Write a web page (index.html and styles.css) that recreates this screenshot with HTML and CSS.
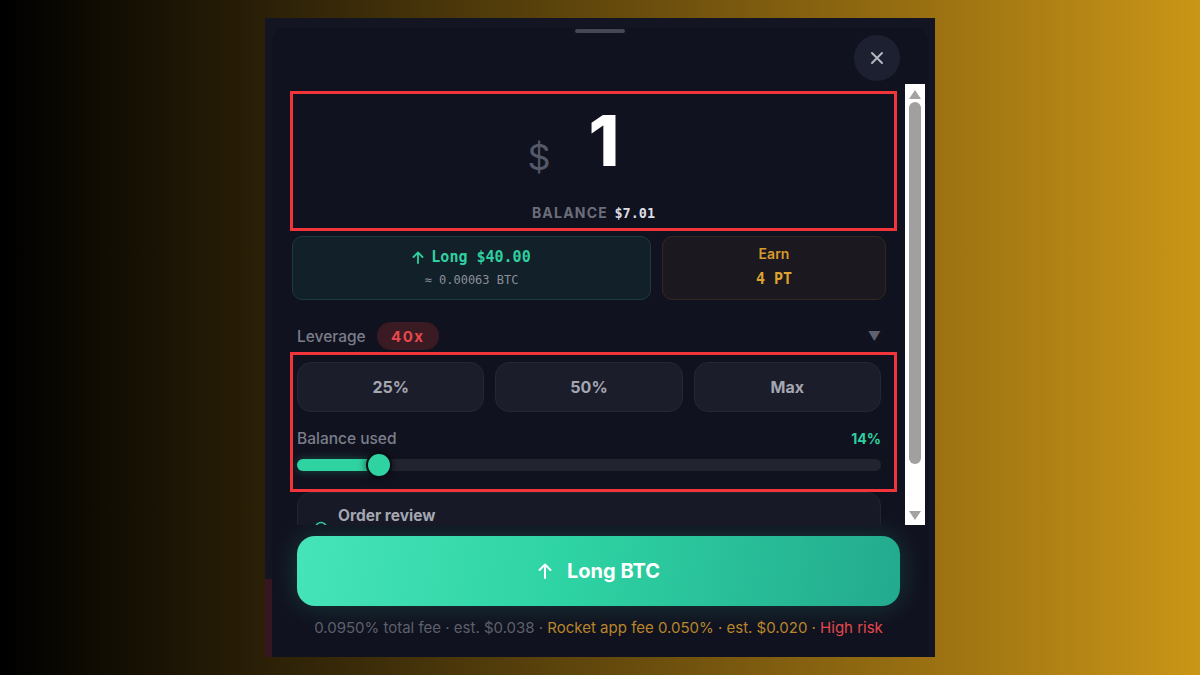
FILE: index.html
```html
<!DOCTYPE html>
<html>
<head>
  <title>Long BTC</title>
  <link rel="stylesheet" href="styles.css">
</head>
<body>
  <div class="sheet">
    <div class="panel">
      <div class="handle"></div>

      <div class="panel-head">
        <button class="close-btn" aria-label="Close">
          <svg width="16" height="16" viewBox="0 0 16 16">
            <path d="M3 3 L13 13 M13 3 L3 13" stroke="#b4b6be" stroke-width="2" stroke-linecap="round"/>
          </svg>
        </button>
      </div>

      <div class="scroll-area">
        <div class="scroll-content">
          <div class="amount-box marked">
            <div class="amount-row">
              <span class="currency">$</span>
              <span class="amount">1</span>
            </div>
            <div class="balance">BALANCE <span class="mono">$7.01</span></div>
          </div>

          <div class="cards">
            <div class="card card-long">
              <div class="card-title">
                <svg width="12" height="13" viewBox="0 0 12 13">
                  <path d="M6 12 V2 M1.5 6 L6 1.5 L10.5 6" stroke="#30cf9f" stroke-width="1.8" fill="none" stroke-linecap="round" stroke-linejoin="round"/>
                </svg>
                Long $40.00
              </div>
              <div class="card-sub">≈ 0.00063 BTC</div>
            </div>
            <div class="card card-earn">
              <div class="earn-label">Earn</div>
              <div class="earn-value">4 PT</div>
            </div>
          </div>

          <div class="leverage-row">
            <span class="muted-label">Leverage</span>
            <span class="lev-badge">40x</span>
            <span class="caret">▼</span>
          </div>

          <div class="size-box marked">
            <div class="quick-btns">
              <button class="quick">25%</button>
              <button class="quick">50%</button>
              <button class="quick">Max</button>
            </div>
            <div class="used-row">
              <span class="muted-label">Balance used</span>
              <span class="used-pct">14%</span>
            </div>
            <div class="track">
              <div class="fill" style="width: 14%"></div>
              <div class="thumb" style="left: 14%"></div>
            </div>
          </div>

          <div class="review">
            <svg class="info" width="14" height="14" viewBox="0 0 14 14">
              <circle cx="7" cy="7" r="5.5" stroke="#2fc99c" stroke-width="1.5" fill="none"/>
            </svg>
            <span class="review-title">Order review</span>
            <svg class="chev" width="12" height="8" viewBox="0 0 12 8">
              <path d="M1.5 1.5 L6 6 L10.5 1.5" stroke="#6b6e7a" stroke-width="1.6" fill="none" stroke-linecap="round"/>
            </svg>
          </div>
        </div>

        <div class="scrollbar">
          <span class="sb-up"></span>
          <div class="sb-thumb"></div>
          <span class="sb-down"></span>
        </div>
      </div>

      <div class="footer">
        <button class="submit">
          <svg width="16" height="18" viewBox="0 0 16 18">
            <path d="M8 16 V3 M2.5 8 L8 2.5 L13.5 8" stroke="#fff" stroke-width="2" fill="none" stroke-linecap="round" stroke-linejoin="round"/>
          </svg>
          Long BTC
        </button>
        <p class="fees">
          0.0950% total fee · est. $0.038 ·
          <span class="fee-app">Rocket app fee 0.050% · est. $0.020 ·</span>
          <span class="fee-risk">High risk</span>
        </p>
      </div>
    </div>
  </div>
</body>
</html>
```

FILE: styles.css
```css
body {
  margin: 0;
  height: 675px;
  overflow: hidden;
  font-family: Inter, "Noto Sans", sans-serif;
  background: linear-gradient(to right, #000 0%, #2b2007 22%, #9b7112 78%, #ca9617 100%);
  display: flex;
  justify-content: center;
  padding-top: 18px;
  box-sizing: border-box;
}

button {
  font-family: inherit;
  cursor: pointer;
}

.mono {
  font-family: "DejaVu Sans Mono", "Liberation Mono", monospace;
}

.sheet {
  width: 670px;
  height: 639px;
  background: linear-gradient(#37171f, #37171f) no-repeat left bottom / 7px 78px, #131523;
  padding: 10px 7px 0;
  box-sizing: border-box;
}

.panel {
  height: 100%;
  background: #11121f;
  border-radius: 14px 14px 0 0;
  display: flex;
  flex-direction: column;
}

.handle {
  width: 50px;
  height: 4px;
  margin: 1px auto 0;
  border-radius: 2px;
  background: #444754;
}

.panel-head {
  height: 49px;
  display: flex;
  justify-content: flex-end;
  padding: 2px 28px 0 0;
}

.close-btn {
  width: 46px;
  height: 46px;
  border-radius: 50%;
  border: none;
  background: #1d2030;
  display: flex;
  align-items: center;
  justify-content: center;
}

/* scrolling body */

.scroll-area {
  height: 441px;
  display: flex;
  padding-left: 18px;
}

.scroll-content {
  width: 615px;
  overflow: hidden;
}

.marked {
  border: 3px solid #f2343b;
  width: 607px;
  box-sizing: border-box;
}

.amount-box {
  height: 140px;
  margin-top: 7px;
  display: flex;
  flex-direction: column;
  align-items: center;
}

.amount-row {
  display: flex;
  align-items: center;
  gap: 38px;
  height: 92px;
  margin-top: 1px;
  padding-right: 40px;
}

.currency {
  color: #555867;
  font-size: 36px;
  margin-top: 32px;
}

.amount {
  color: #fff;
  font-size: 70px;
  font-weight: 800;
  line-height: 1;
}

.balance {
  margin-top: auto;
  margin-bottom: 6px;
  color: #6b6e7a;
  font-size: 14px;
  line-height: 17px;
  font-weight: 700;
  letter-spacing: 1.2px;
}

.balance .mono {
  color: #dcdce2;
  font-size: 13.5px;
  letter-spacing: 0;
  margin-left: 2px;
}

/* long / earn cards */

.cards {
  display: flex;
  gap: 11px;
  margin: 5px 0 0 2px;
  width: 594px;
  height: 64px;
}

.card {
  border-radius: 10px;
  display: flex;
  flex-direction: column;
  align-items: center;
  justify-content: center;
  box-sizing: border-box;
}

.card-long {
  flex: 0 0 359px;
  gap: 7px;
  background: #112029;
  border: 1px solid #1b3b3e;
}

.card-earn {
  flex: 1;
  gap: 8px;
  padding-bottom: 4px;
  background: #1b1820;
  border: 1px solid #35271f;
}

.card-title {
  color: #30cf9f;
  font-family: "DejaVu Sans Mono", monospace;
  font-weight: 700;
  font-size: 15px;
  line-height: 18px;
  display: flex;
  align-items: center;
  gap: 7px;
}

.card-sub {
  color: #8b8e98;
  font-family: "DejaVu Sans Mono", monospace;
  font-size: 12px;
  line-height: 15px;
}

.earn-label {
  color: #d79a2d;
  font-size: 14px;
  line-height: 17px;
  font-weight: 600;
}

.earn-value {
  color: #dda230;
  font-family: "DejaVu Sans Mono", monospace;
  font-weight: 700;
  font-size: 15px;
  line-height: 18px;
}

/* leverage */

.leverage-row {
  display: flex;
  align-items: center;
  height: 28px;
  margin: 22px 0 2px 7px;
  width: 584px;
}

.muted-label {
  color: #7b7e8a;
  font-size: 15.5px;
  font-weight: 500;
}

.lev-badge {
  margin-left: 11px;
  background: #3a1b23;
  color: #e5484d;
  font-size: 15px;
  font-weight: 700;
  letter-spacing: 1.5px;
  height: 28px;
  width: 62px;
  border-radius: 14px;
  display: flex;
  align-items: center;
  justify-content: center;
}

.caret {
  margin-left: auto;
  color: #5f626e;
  font-size: 13px;
}

/* size selector */

.size-box {
  height: 140px;
  padding: 7px 13px 0 4px;
}

.quick-btns {
  display: flex;
  gap: 11px;
}

.quick {
  flex: 1;
  height: 50px;
  border-radius: 14px;
  background: #1b1d2a;
  border: 1px solid #252736;
  color: #a4a7b1;
  font-size: 16px;
  font-weight: 700;
}

.used-row {
  display: flex;
  justify-content: space-between;
  align-items: center;
  height: 20px;
  margin-top: 16px;
}

.used-pct {
  color: #30cf9f;
  font-size: 14px;
  font-weight: 700;
}

.track {
  position: relative;
  height: 12px;
  margin-top: 11px;
  border-radius: 6px;
  background: #22242f;
}

.fill {
  height: 100%;
  border-radius: 6px;
  background: #2fd3a2;
  box-shadow: 0 0 10px rgba(47, 211, 162, 0.3);
}

.thumb {
  position: absolute;
  top: 50%;
  width: 22px;
  height: 22px;
  border-radius: 50%;
  background: #2fd3a2;
  border: 2px solid #0b0d16;
  transform: translate(-50%, -50%);
  box-shadow: 0 0 8px rgba(0, 0, 0, 0.6);
}

/* order review (cut off by the scroll area) */

.review {
  margin-left: 7px;
  width: 584px;
  height: 60px;
  background: #171926;
  border: 1px solid #22242f;
  border-radius: 14px;
  box-sizing: border-box;
  position: relative;
}

.review-title {
  position: absolute;
  left: 40px;
  top: 13px;
  color: #a4a7b1;
  font-size: 15.5px;
  font-weight: 700;
}

.info {
  position: absolute;
  left: 16px;
  top: 28px;
}

.chev {
  position: absolute;
  right: 22px;
  top: 33px;
}

/* classic scrollbar */

.scrollbar {
  width: 20px;
  background: #fff;
  display: flex;
  flex-direction: column;
  align-items: center;
}

.sb-up,
.sb-down {
  width: 0;
  height: 0;
  border-left: 6px solid transparent;
  border-right: 6px solid transparent;
}

.sb-up {
  margin-top: 6px;
  border-bottom: 9px solid #a3a3a3;
}

.sb-down {
  margin-top: auto;
  margin-bottom: 5px;
  border-top: 9px solid #a3a3a3;
}

.sb-thumb {
  width: 12px;
  height: 362px;
  margin-top: 3px;
  border-radius: 6px;
  background: #a0a0a0;
}

/* footer */

.footer {
  padding: 11px 28px 0 25px;
}

.submit {
  width: 100%;
  height: 70px;
  border: none;
  border-radius: 18px;
  background: linear-gradient(100deg, #46e4b9 0%, #2ed3a3 45%, #23aa8e 100%);
  box-shadow: 0 0 28px rgba(46, 211, 163, 0.22);
  color: #fff;
  font-size: 20px;
  font-weight: 700;
  display: flex;
  align-items: center;
  justify-content: center;
  gap: 14px;
}

.fees {
  margin: 13px 0 0;
  text-align: center;
  color: #5d606c;
  font-size: 15px;
  line-height: 18px;
  white-space: nowrap;
}

.fee-app {
  color: #b8862b;
}

.fee-risk {
  color: #e5484d;
}
```
